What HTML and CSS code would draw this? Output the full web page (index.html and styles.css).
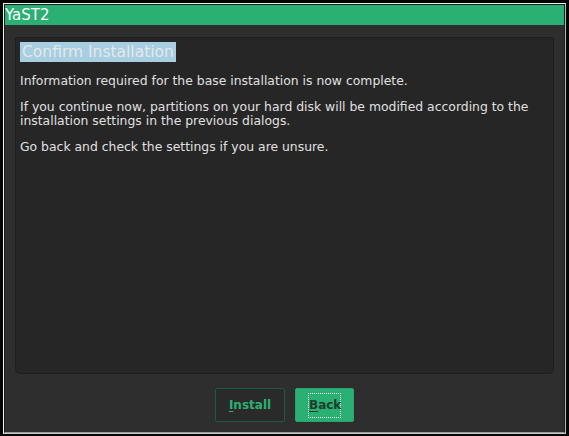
FILE: index.html
```html
<!DOCTYPE html>
<html>
<head>
<meta charset="utf-8">
<link rel="stylesheet" href="styles.css">
</head>
<body>
<div class="window">
  <div class="frame">
    <div class="titlebar">YaST2</div>
    <div class="main">
      <div class="content">
        <div class="heading"><span class="hl">Confirm Installation</span></div>
        <p>Information required for the base installation is now complete.</p>
        <p>If you continue now, partitions on your hard disk will be modified according to the installation settings in the previous dialogs.</p>
        <p>Go back and check the settings if you are unsure.</p>
      </div>
      <div class="buttons">
        <button class="btn btn-install"><u>I</u>nstall</button>
        <button class="btn btn-back"><span class="focus"><u>B</u>ack</span></button>
      </div>
    </div>
  </div>
</div>
</body>
</html>
```

FILE: styles.css
```css
html, body {
  margin: 0;
  padding: 0;
  background: #050505;
  width: 569px;
  height: 436px;
  overflow: hidden;
  font-family: "DejaVu Sans", sans-serif;
}

.window {
  margin: 3px 0 0 3px;
  width: 561px;
  height: 429px;
  border-left: 1px solid #f2f2f2;
  border-top: 1px solid #f2f2f2;
  border-right: 1px solid #b9b9b9;
  border-bottom: 1px solid #c9c9c9;
}

.frame {
  height: 427px;
  border: 1px solid #1b1b1b;
  border-bottom-color: #9a9a9a;
  display: flex;
  flex-direction: column;
  background: #2e2e2e;
}

.titlebar {
  height: 20px;
  line-height: 20px;
  background: #2ab073;
  color: #ffffff;
  font-size: 15px;
  white-space: nowrap;
}

.main {
  flex: 1;
  display: flex;
  flex-direction: column;
  padding: 12px 10px 0 10px;
}

.content {
  height: 327px;
  background: #262626;
  border: 1px solid #1e1e1e;
  border-radius: 2px 2px 5px 5px;
  padding: 4px 4px;
  color: #e0e0e0;
  font-size: 12.4px;
  line-height: 14px;
}

.heading {
  font-size: 15.5px;
  line-height: 20px;
  height: 20px;
}

.hl {
  background: #a8cee1;
  color: #e4e8ea;
  padding: 0 2px 0 2px;
  display: inline-block;
}

.content p {
  margin: 12px 0 0 0;
}

.buttons {
  display: flex;
  justify-content: center;
  gap: 10px;
  padding-top: 14px;
}

.btn {
  height: 34px;
  font-family: "DejaVu Sans", sans-serif;
  font-weight: bold;
  font-size: 12px;
  border-radius: 2px;
  padding: 0;
  display: flex;
  align-items: center;
  justify-content: center;
}

.btn u {
  text-decoration-thickness: 1px;
  text-underline-offset: 2px;
}

.btn-install {
  width: 70px;
  background: #2a2a2a;
  border: 1px solid #1d5a40;
  color: #2ab073;
}

.btn-back {
  width: 59px;
  background: #2ab073;
  border: 1px solid #27a56c;
  color: #1f3c2f;
}

.focus {
  display: inline-block;
  border: 1px dotted #f4f4f4;
  padding: 4px 0 5px 0;
  width: 31px;
  text-align: center;
  line-height: 14px;
}
```
